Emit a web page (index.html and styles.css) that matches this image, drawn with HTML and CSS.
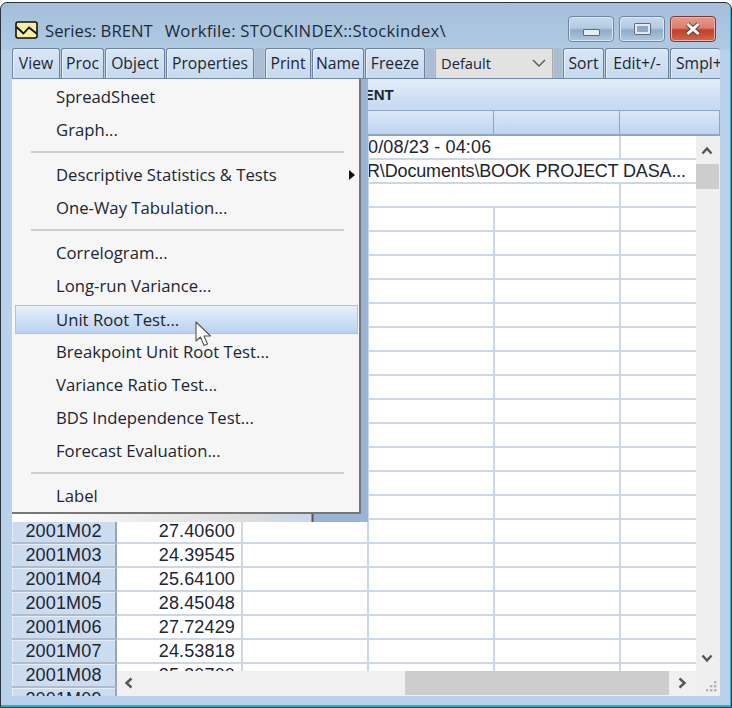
FILE: index.html
```html
<!DOCTYPE html>
<html lang="en">
<head>
  <meta charset="UTF-8">
  <title>Series: BRENT</title>
  <link rel="stylesheet" href="styles.css">
</head>
<body>

  <div class="window">

    <div class="titlebar">
      <svg class="app-icon" width="23" height="18" viewBox="0 0 23 18">
        <rect x="1" y="1" width="21" height="16" rx="2" fill="#f8ee9c" stroke="#111" stroke-width="1.6"/>
        <path d="M1.5 6 L8.5 12.5 L14 6.5 L21.5 12.5" fill="none" stroke="#111" stroke-width="1.8"/>
      </svg>
      <span class="title-text">Series: BRENT</span>
      <span class="title-text title-file">Workfile: STOCKINDEX::Stockindex\</span>
      <div class="controls">
        <span class="ctl"><span class="glyph-min"></span></span>
        <span class="ctl"><span class="glyph-max"></span></span>
        <span class="ctl ctl-close">
          <svg width="18" height="14" viewBox="0 0 18 14">
            <path d="M3.5 2 L14.5 12 M14.5 2 L3.5 12" stroke="#4a4a4a" stroke-width="5"/>
            <path d="M3.5 2 L14.5 12 M14.5 2 L3.5 12" stroke="#fff" stroke-width="3"/>
          </svg>
        </span>
      </div>
    </div>

    <div class="toolbar">
      <span class="btn">View</span>
      <span class="btn">Proc</span>
      <span class="btn">Object</span>
      <span class="btn">Properties</span>
      <span class="grip"></span>
      <span class="btn">Print</span>
      <span class="btn">Name</span>
      <span class="btn">Freeze</span>
      <span class="grip"></span>
      <span class="combo">Default
        <svg width="14" height="8" viewBox="0 0 14 8"><path d="M1 1 L7 7 L13 1" fill="none" stroke="#555" stroke-width="1.4"/></svg>
      </span>
      <span class="grip"></span>
      <span class="btn">Sort</span>
      <span class="btn">Edit+/-</span>
      <span class="btn btn-clip">Smpl+</span>
    </div>

    <div class="sheet">
      <div class="series-name">BRENT</div>
      <div class="col-heads">
        <span></span><span></span><span></span><span></span><span></span><span></span>
      </div>

      <div class="sheet-body">
        <div class="table-wrap">
          <table class="data">
            <colgroup>
              <col class="c-lab"><col class="c-val"><col class="c-std"><col class="c-std"><col class="c-std"><col class="c-std">
            </colgroup>
            <tr><th></th><td></td><td></td><td class="note" colspan="2">0/08/23 - 04:06</td><td></td></tr>
            <tr><th></th><td></td><td></td><td class="note note-wide" colspan="3">R\Documents\BOOK PROJECT DASA...</td></tr>
            <tr><th></th><td></td><td></td><td colspan="2"></td><td></td></tr>
            <tr><th></th><td></td><td></td><td></td><td></td><td></td></tr>
            <tr><th></th><td></td><td></td><td></td><td></td><td></td></tr>
            <tr><th></th><td></td><td></td><td></td><td></td><td></td></tr>
            <tr><th></th><td></td><td></td><td></td><td></td><td></td></tr>
            <tr><th></th><td></td><td></td><td></td><td></td><td></td></tr>
            <tr><th></th><td></td><td></td><td></td><td></td><td></td></tr>
            <tr><th></th><td></td><td></td><td></td><td></td><td></td></tr>
            <tr><th></th><td></td><td></td><td></td><td></td><td></td></tr>
            <tr><th></th><td></td><td></td><td></td><td></td><td></td></tr>
            <tr><th></th><td></td><td></td><td></td><td></td><td></td></tr>
            <tr><th></th><td></td><td></td><td></td><td></td><td></td></tr>
            <tr><th></th><td></td><td></td><td></td><td></td><td></td></tr>
            <tr><th></th><td></td><td></td><td></td><td></td><td></td></tr>
            <tr><th>2001M02</th><td>27.40600</td><td></td><td></td><td></td><td></td></tr>
            <tr><th>2001M03</th><td>24.39545</td><td></td><td></td><td></td><td></td></tr>
            <tr><th>2001M04</th><td>25.64100</td><td></td><td></td><td></td><td></td></tr>
            <tr><th>2001M05</th><td>28.45048</td><td></td><td></td><td></td><td></td></tr>
            <tr><th>2001M06</th><td>27.72429</td><td></td><td></td><td></td><td></td></tr>
            <tr><th>2001M07</th><td>24.53818</td><td></td><td></td><td></td><td></td></tr>
            <tr><th>2001M08</th><td>25.30700</td><td></td><td></td><td></td><td></td></tr>
            <tr><th>2001M09</th><td></td><td></td><td></td><td></td><td></td></tr>
          </table>

          <div class="hscroll">
            <svg class="arrow" width="12" height="12" viewBox="0 0 12 12"><path d="M8.5 1.5 L3.5 6 L8.5 10.5" fill="none" stroke="#555" stroke-width="2.4"/></svg>
            <span class="hthumb"></span>
            <svg class="arrow" width="12" height="12" viewBox="0 0 12 12"><path d="M3.5 1.5 L8.5 6 L3.5 10.5" fill="none" stroke="#555" stroke-width="2.4"/></svg>
          </div>
        </div>

        <div class="vscroll">
          <svg class="arrow arrow-up" width="12" height="12" viewBox="0 0 12 12"><path d="M1.5 8.5 L6 3.5 L10.5 8.5" fill="none" stroke="#555" stroke-width="2.4"/></svg>
          <span class="vthumb"></span>
          <svg class="arrow arrow-down" width="12" height="12" viewBox="0 0 12 12"><path d="M1.5 3.5 L6 8.5 L10.5 3.5" fill="none" stroke="#555" stroke-width="2.4"/></svg>
          <svg class="size-grip" width="14" height="12" viewBox="0 0 14 12" fill="#b5b5b5">
            <rect x="10" y="0" width="2.4" height="2.4"/>
            <rect x="6" y="4" width="2.4" height="2.4"/><rect x="10" y="4" width="2.4" height="2.4"/>
            <rect x="2" y="8" width="2.4" height="2.4"/><rect x="6" y="8" width="2.4" height="2.4"/><rect x="10" y="8" width="2.4" height="2.4"/>
          </svg>
        </div>
      </div>
    </div>

    <div class="menu-shadow"></div>
    <div class="menu">
      <div class="item">SpreadSheet</div>
      <div class="item">Graph...</div>
      <div class="sep"></div>
      <div class="item">Descriptive Statistics &amp; Tests<span class="sub"></span></div>
      <div class="item">One-Way Tabulation...</div>
      <div class="sep"></div>
      <div class="item">Correlogram...</div>
      <div class="item">Long-run Variance...</div>
      <div class="item active">Unit Root Test...</div>
      <div class="item">Breakpoint Unit Root Test...</div>
      <div class="item">Variance Ratio Test...</div>
      <div class="item">BDS Independence Test...</div>
      <div class="item">Forecast Evaluation...</div>
      <div class="sep"></div>
      <div class="item">Label</div>
    </div>

    <svg class="cursor" width="22" height="28" viewBox="0 0 22 28">
      <path d="M1 1 L1 20 L5.5 16 L9 24.5 L12.5 23 L9 15 L15.5 15 Z" fill="#fff" stroke="#555" stroke-width="1.1" stroke-linejoin="round"/>
    </svg>
  </div>

</body>
</html>
```

FILE: styles.css
```css
* {
  box-sizing: border-box;
}

body {
  margin: 0;
  background: #fff;
  font-family: "Open Sans", sans-serif;
  color: #1c2530;
}

.window {
  position: relative;
  width: 732px;
  height: 706px;
  margin-top: 2px;
  padding: 0 11px;
  border: 1px solid #27343c;
  border-radius: 7px 7px 0 0;
  background: linear-gradient(#a5bfda 0, #b0c9e3 46px, #b9d1ea 47px);
  box-shadow: inset -1px -2px 0 #2aaecb;
  overflow: hidden;
}

/* title bar */
.titlebar {
  display: flex;
  align-items: center;
  height: 44px;
  padding: 10px 0 0 3px;
}

.app-icon {
  margin-right: 7px;
}

.title-text {
  font-size: 16.7px;
  color: #1e2a38;
  white-space: nowrap;
}

.title-file {
  margin-left: 12px;
  letter-spacing: 0.25px;
}

.controls {
  display: flex;
  gap: 5px;
  margin-left: auto;
  margin-right: 4px;
  margin-top: -2px;
}

.ctl {
  display: flex;
  align-items: center;
  justify-content: center;
  width: 46px;
  height: 26px;
  border: 1px solid #6f86a0;
  border-radius: 4px;
  background: linear-gradient(#c6d8ec 0, #b4cbe4 45%, #8fabc9 55%, #b0c8e2 100%);
  box-shadow: inset 0 0 0 1px #dce8f4;
}

.ctl-close {
  border-color: #7a3a34;
  background: linear-gradient(#e79a8e 0, #dd7e70 45%, #bf3f26 55%, #d0694f 100%);
  box-shadow: inset 0 0 0 1px #eeb1a8;
}

.glyph-min {
  width: 17px;
  height: 7px;
  margin-top: 6px;
  border: 1px solid #5d6c7e;
  border-radius: 1px;
  background: #e6edf5;
}

.glyph-max {
  width: 17px;
  height: 12px;
  border: 3px solid #e2e9f2;
  outline: 1px solid #5d6c7e;
  outline-offset: -1px;
  border-radius: 1px;
  background: #8fa7c2;
}

/* toolbar */
.toolbar {
  display: grid;
  grid-template-columns: 48px 43px 60px 88px 9px 46px 52px 60px 8px 118px 8px 41px 64px 50px;
  column-gap: 1px;
  width: 708px;
  height: 32px;
  padding-top: 1px;
  background: #b4c8de;
  border-bottom: 1px solid #7289a5;
  overflow: hidden;
}

.btn {
  height: 31px;
  padding-top: 4px;
  border: 1px solid #6d84a0;
  border-bottom: none;
  border-radius: 3px 3px 0 0;
  background: linear-gradient(#d9e6f5, #c6d9ee);
  box-shadow: inset 1px 1px 0 #e8f0f9;
  font-size: 15.7px;
  line-height: 20px;
  text-align: center;
  white-space: nowrap;
  overflow: hidden;
}

.btn-clip {
  padding-left: 5px;
  border-right: none;
  text-align: left;
}

.grip {
  background: #aabdd3;
}

.combo {
  display: flex;
  align-items: center;
  justify-content: space-between;
  padding: 0 6px 2px 5px;
  background: #e2e2e2;
  border: 1px solid #adadad;
  font-size: 14.7px;
}

/* sheet */
.sheet {
  width: 708px;
  height: 617px;
  background: #fff;
  overflow: hidden;
}

.series-name {
  height: 31px;
  padding-left: 330px;
  background: linear-gradient(#e3edf9, #c4d8f0);
  font-family: "Liberation Sans", sans-serif;
  font-size: 15px;
  font-weight: bold;
  line-height: 32px;
}

.col-heads {
  display: grid;
  grid-template-columns: 105px 126px 125px 126px 126px 100px;
  height: 26px;
  border-top: 1px solid #8fa4bd;
  border-bottom: 2px solid #8fa4bd;
  background: linear-gradient(#dce8f7, #bed3ee);
}

.col-heads span {
  border-right: 1px solid #8fa4bd;
}

.sheet-body {
  display: flex;
  height: 560px;
}

.table-wrap {
  position: relative;
  width: 684px;
  overflow: hidden;
}

.data {
  table-layout: fixed;
  width: 734px;
  border-collapse: separate;
  border-spacing: 0;
  font-family: "Liberation Sans", sans-serif;
  font-size: 18px;
  letter-spacing: 0.15px;
}

.c-lab { width: 105px; }
.c-val { width: 126px; }
.c-std { width: 126px; }

.data tr {
  height: 24px;
}

.data th,
.data td {
  height: 24px;
  padding: 0;
  white-space: nowrap;
  overflow: hidden;
  font-weight: normal;
  color: #1c2530;
}

.data th {
  background: #cbdcf1;
  border-right: 2px solid #93a7bf;
  border-bottom: 2px solid #aebccd;
  box-shadow: inset 1px 1px 0 #e6eef8;
  text-align: center;
}

.data td {
  padding-right: 6px;
  border-right: 2px solid #cdd6e4;
  border-bottom: 2px solid #cdd6e4;
  text-align: right;
}

.data td.note {
  padding: 0;
  text-indent: -1px;
  text-align: left;
}

.data td.note-wide {
  text-indent: -2px;
  letter-spacing: -0.15px;
  border-right: none;
}

.hscroll {
  position: absolute;
  left: 105px;
  right: 0;
  bottom: 0;
  height: 25px;
  background: #f0f0f0;
}

.hscroll .arrow {
  position: absolute;
  top: 6px;
  left: 6px;
}

.hscroll .arrow:last-child {
  left: auto;
  right: 8px;
}

.hthumb {
  position: absolute;
  top: 0;
  bottom: 1px;
  left: 288px;
  right: 27px;
  background: #cdcdcd;
}

.vscroll {
  position: relative;
  width: 24px;
  background: #efefef;
}

.vscroll .arrow {
  position: absolute;
  left: 5px;
}

.arrow-up { top: 9px; }
.arrow-down { bottom: 32px; }

.vthumb {
  position: absolute;
  top: 28px;
  left: 0;
  width: 23px;
  height: 25px;
  background: #cdcdcd;
}

.size-grip {
  position: absolute;
  right: 2px;
  bottom: 3px;
}

/* popup menu */
.menu-shadow {
  position: absolute;
  left: 11px;
  top: 76px;
  width: 356px;
  height: 443px;
  background: linear-gradient(to right, #fff 0, #dcdcdc 240px, #c9d8ea 285px, #c9d8ea 299px, #555 300px, #555 301px, #9bb3d4 302px, #9bb3d4 100%);
}

.menu {
  position: absolute;
  left: 11px;
  top: 76px;
  width: 349px;
  height: 435px;
  padding-top: 1px;
  background: #f6f6f6;
  border-right: 2px solid #777;
  border-bottom: 2px solid #777;
  font-size: 16.7px;
}

.item {
  position: relative;
  height: 33px;
  padding-left: 44px;
  line-height: 33px;
  color: #1c2530;
  white-space: nowrap;
}

.item.active {
  height: 29px;
  margin: 3px 1px 1px 3px;
  padding-left: 40px;
  border: 1px solid #a9c6ea;
  line-height: 28px;
  background: linear-gradient(#e7f0fb, #bad2f0);
}

.sep {
  height: 2px;
  margin: 5px 15px 5px 19px;
  background: #cfcfcf;
}

.sub {
  position: absolute;
  right: 4px;
  top: 12px;
  border-left: 6px solid #111;
  border-top: 5px solid transparent;
  border-bottom: 5px solid transparent;
}

.cursor {
  position: absolute;
  left: 194px;
  top: 318px;
}
```
